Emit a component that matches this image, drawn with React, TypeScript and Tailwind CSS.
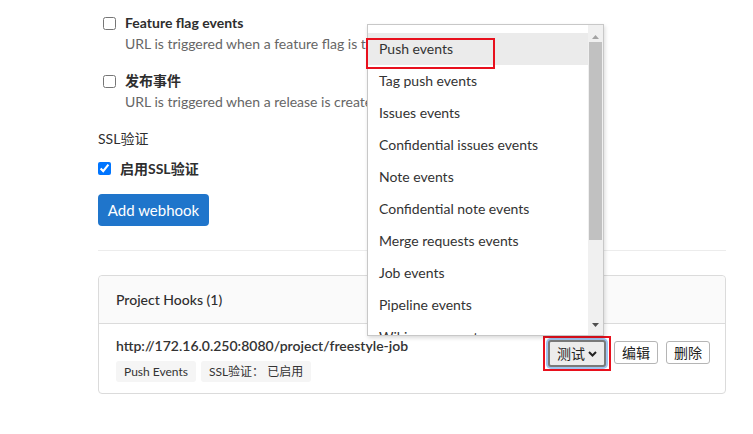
import React from "react";

const font = { fontFamily: 'Lato, "Noto Sans CJK SC", sans-serif' };

const items = [
  "Push events",
  "Tag push events",
  "Issues events",
  "Confidential issues events",
  "Note events",
  "Confidential note events",
  "Merge requests events",
  "Job events",
  "Pipeline events",
  "Wiki page events",
];

export default function App() {
  return (
    <div className="relative w-[753px] h-[434px] bg-white overflow-hidden text-[14px] text-[#2e2e2e]" style={font}>
      <div className="pl-[98px] w-[726px] pt-[13px]">
        {/* Feature flag events */}
        <div className="flex">
          <input type="checkbox" readOnly className="m-0 ml-[5px] mt-[4px] w-[13px] h-[13px]" />
          <div className="ml-[9px]">
            <div className="font-bold leading-[20px]">Feature flag events</div>
            <div className="mt-[1px] leading-[20px] text-[#666]">URL is triggered when a feature flag is toggled</div>
          </div>
        </div>
        <div className="flex mt-[17px]">
          <input type="checkbox" readOnly className="m-0 ml-[5px] mt-[4px] w-[13px] h-[13px]" />
          <div className="ml-[9px]">
            <div className="font-bold leading-[20px]">发布事件</div>
            <div className="mt-[1px] leading-[20px] text-[#666]">URL is triggered when a release is created/updated</div>
          </div>
        </div>
        <div className="mt-[17px] leading-[20px]">SSL验证</div>
        <div className="flex items-center mt-[9px] h-[20px]">
          <input type="checkbox" checked readOnly className="m-0 w-[13px] h-[13px]" />
          <span className="ml-[9px] font-bold">启用SSL验证</span>
        </div>
        <button className="mt-[16px] h-[32px] w-[111px] rounded-[4px] bg-[#1f75cb] text-white text-[15px]">Add webhook</button>
        <div className="mt-[24px] border-t border-[#ececec]" />
        <div className="mt-[24px] border border-[#dbdbdb] rounded-[4px]">
          <div className="h-[48px] bg-[#fafafa] border-b border-[#dbdbdb] px-[17px] flex items-center rounded-t-[4px]">
            <span className="font-medium">Project Hooks (1)</span>
          </div>
          <div className="flex justify-between pl-[17px] pr-[15px] pt-[12px] pb-[11px]">
            <div>
              <div className="font-semibold leading-[20px] text-[#333]">http://172.16.0.250:8080/project/freestyle-job</div>
              <div className="flex gap-[5px] mt-[5px]">
                <span className="bg-[#f5f5f5] rounded-[3px] h-[21px] px-[8px] text-[12px] leading-[21px] text-[#333]">Push Events</span>
                <span className="bg-[#f5f5f5] rounded-[3px] h-[21px] px-[8px] text-[12px] leading-[21px] text-[#333]">SSL验证： 已启用</span>
              </div>
            </div>
            <div className="flex items-start gap-[8px] mt-[4px]">
              <div className="relative">
                <div className="absolute -left-[3px] -top-[4px] w-[68px] h-[35px] border-2 border-[#e8101d]" />
                <button className="h-[27px] w-[58px] rounded-[3px] border-2 border-[#7a7a7a] bg-[#ececec] ring-2 ring-[#9fc4f0] flex items-center justify-center gap-[3px] text-[14px] text-[#222] ml-[2px]">
                  测试
                  <svg width="9" height="6" viewBox="0 0 9 6"><path d="M1 1l3.5 3.5L8 1" stroke="#222" strokeWidth="2" fill="none" /></svg>
                </button>
              </div>
              <button className="h-[23px] w-[44px] mt-[1px] rounded-[3px] border border-[#b5b5b5] bg-white text-[14px] text-[#222]">编辑</button>
              <button className="h-[23px] w-[44px] mt-[1px] rounded-[3px] border border-[#b5b5b5] bg-white text-[14px] text-[#222]">删除</button>
            </div>
          </div>
        </div>
      </div>

      {/* Dropdown */}
      <div className="absolute left-[367px] top-[24px] w-[237px] h-[312px] bg-white border border-[#c8c8c8] shadow-[1px_2px_4px_rgba(0,0,0,0.15)] overflow-hidden flex">
        <div className="flex-1 pt-[8px]">
          {items.map((t, i) => (
            <div key={t} className={`h-[32px] leading-[32px] pl-[11px] text-[14px] text-[#333] ${i === 0 ? "bg-[#ebebeb]" : ""}`}>
              {t}
            </div>
          ))}
        </div>
        <div className="w-[15px] bg-[#f0f0f0] relative">
          <svg className="absolute left-[4px] top-[10px]" width="7" height="4" viewBox="0 0 7 4"><path d="M0 4L3.5 0L7 4z" fill="#a3a3a3" /></svg>
          <div className="absolute left-[1px] right-[1px] top-[17px] h-[198px] bg-[#c1c1c1]" />
          <svg className="absolute left-[4px] bottom-[8px]" width="7" height="4" viewBox="0 0 7 4"><path d="M0 0L3.5 4L7 0z" fill="#505050" /></svg>
        </div>
      </div>
      {/* red highlight around Push events */}
      <div className="absolute left-[366px] top-[38px] w-[129px] h-[31px] border-2 border-[#e8101d]" />
    </div>
  );
}
